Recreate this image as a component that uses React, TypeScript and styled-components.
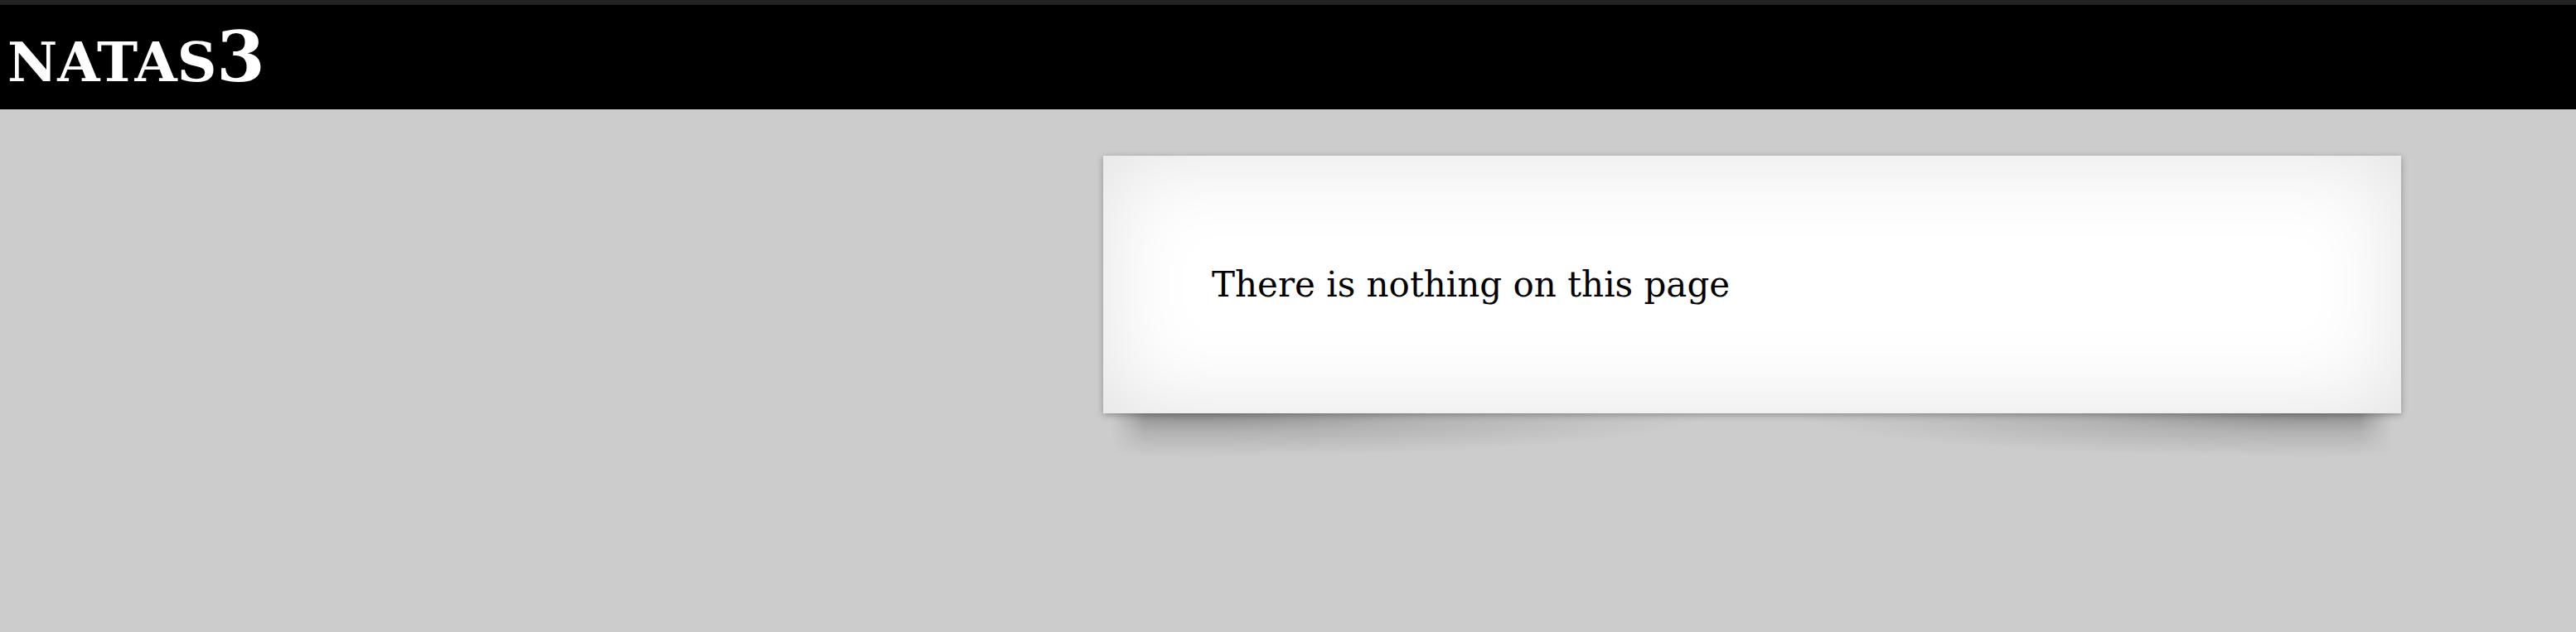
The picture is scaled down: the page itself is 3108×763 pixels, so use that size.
import React from "react";
import styled, { createGlobalStyle } from "styled-components";

const Global = createGlobalStyle`
  html {
    background: #ccc;
  }
  body {
    margin: 0;
    padding: 0;
    font-family: "DejaVu Serif", "Liberation Serif", serif;
  }
`;

const Header = styled.header`
  background: #000;
  border-top: 6px solid #222;
  height: 132px;
  box-sizing: border-box;
  padding: 21px 0 0 9px;
`;

const Title = styled.h1`
  margin: 0;
  font-family: "DejaVu Serif", serif;
  font-weight: bold;
  font-size: 84px;
  line-height: 1;
  color: #fff;
`;

const SmallCaps = styled.span`
  font-size: 66px;
`;

const Main = styled.main`
  padding: 56px 0 0 1331px;
`;

const Frame = styled.div`
  width: 1566px;
  display: flex;
  flex-direction: column;
`;

const Card = styled.section`
  box-sizing: border-box;
  padding: 131px 131px;
  background: #fff;
  box-shadow: 0 2px 8px rgba(0, 0, 0, 0.3), 0 0 110px rgba(0, 0, 0, 0.12) inset;
`;

/* the "lifted corners" shadow that falls under the card */
const Shade = styled.div`
  height: 64px;
  background:
    radial-gradient(ellipse 620px 52px at 110px 0, rgba(0, 0, 0, 0.3), rgba(0, 0, 0, 0.12) 45%, rgba(0, 0, 0, 0) 100%),
    radial-gradient(ellipse 620px 52px at calc(100% - 110px) 0, rgba(0, 0, 0, 0.3), rgba(0, 0, 0, 0.12) 45%, rgba(0, 0, 0, 0) 100%);
  -webkit-mask-image: linear-gradient(90deg, transparent 10px, #000 50px, #000 calc(100% - 50px), transparent calc(100% - 10px));
  mask-image: linear-gradient(90deg, transparent 10px, #000 50px, #000 calc(100% - 50px), transparent calc(100% - 10px));
`;

const Message = styled.p`
  margin: 0;
  font-family: "DejaVu Serif", serif;
  font-size: 42px;
  line-height: 49px;
  color: #000;
`;

export default function App() {
  return (
    <>
      <Global />
      <Header>
        <Title>
          <SmallCaps>NATAS</SmallCaps>3
        </Title>
      </Header>
      <Main>
        <Frame>
          <Card>
            <Message>There is nothing on this page</Message>
          </Card>
          <Shade />
        </Frame>
      </Main>
    </>
  );
}
